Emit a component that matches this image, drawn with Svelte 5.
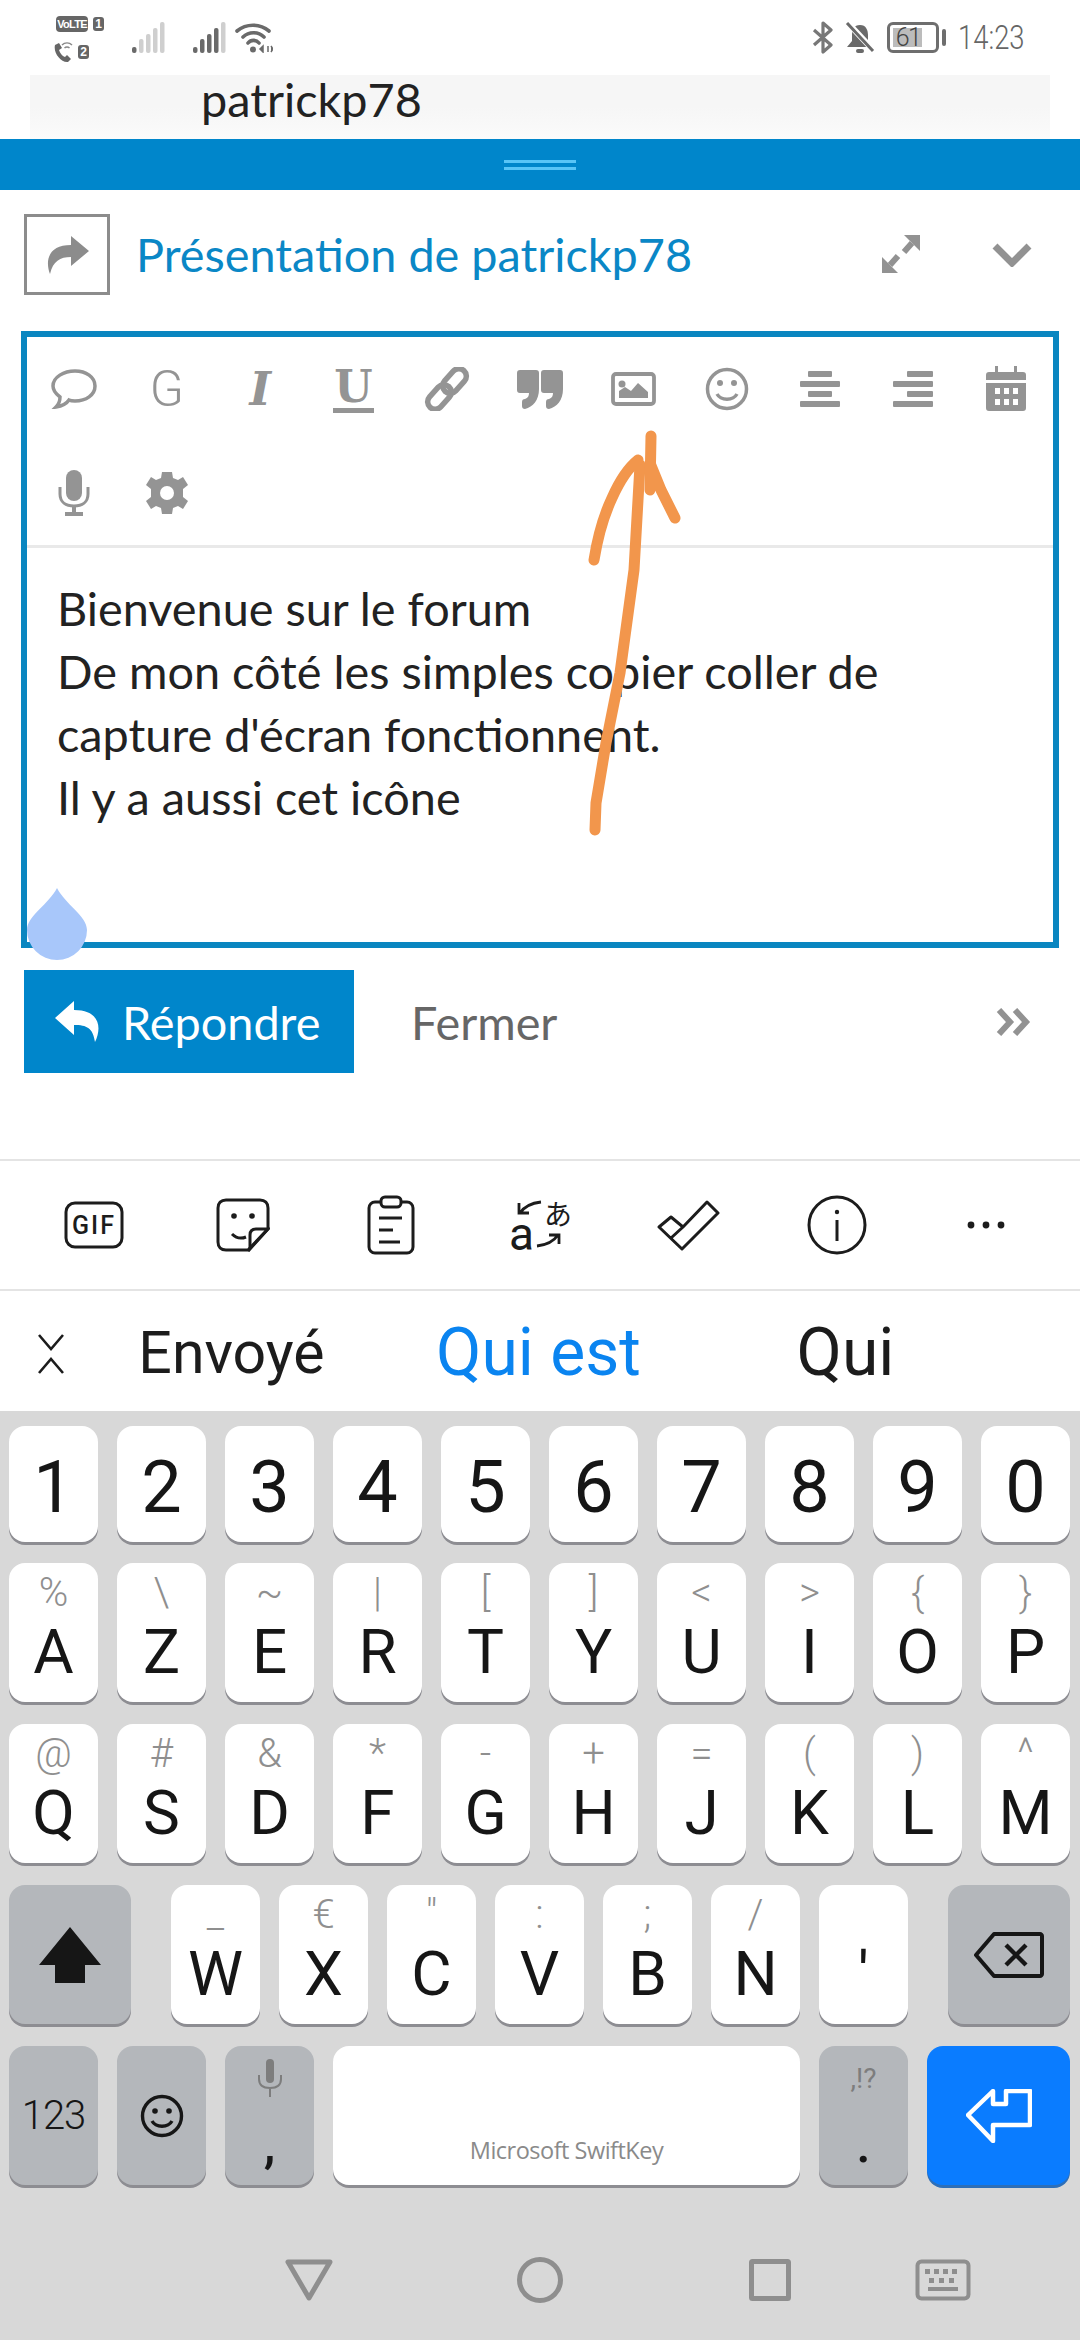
<script>
const row1 = ['1','2','3','4','5','6','7','8','9','0'];
const row2 = [['A','%'],['Z','\\'],['E','~'],['R','|'],['T','['],['Y',']'],['U','<'],['I','>'],['O','{'],['P','}']];
const row3 = [['Q','@'],['S','#'],['D','&'],['F','*'],['G','-'],['H','+'],['J','='],['K','('],['L',')'],['M','^']];
const row4 = [['W','_'],['X','€'],['C','"'],['V',':'],['B',';'],['N','/'],["'",'']];
const lines = ['Bienvenue sur le forum','De mon côté les simples copier coller de',"capture d'écran fonctionnent.",'Il y a aussi cet icône'];
const bars = [6, 14, 19, 25, 31];
</script>

<div class="screen">
  <header class="status">
    <div class="status-left">
      <div class="sims">
        <div class="sim"><span class="volte">VoLTE</span><span class="simno">1</span></div>
        <div class="sim sim2">
          <svg width="20" height="21" viewBox="0 0 20 21"><path d="M1 3l4-2 3 5-3 2c1 3 3 6 6 7l2-2 4 4-3 3C7 21-1 11 1 3z" fill="#666"/><path d="M8 3a7 7 0 0 1 10 0M10.5 6a3.5 3.5 0 0 1 5 0" stroke="#888" stroke-width="1.4" fill="none"/></svg>
          <span class="simno">2</span>
        </div>
      </div>
      <svg class="sig1" width="34" height="31" viewBox="0 0 34 31">
        {#each bars as h, i}
          <rect x={i * 7} y={31 - h} width="4.5" height={h} rx="2" fill={i === 0 ? '#6a6a6a' : '#cfcfcf'}/>
        {/each}
      </svg>
      <svg class="sig2" width="34" height="31" viewBox="0 0 34 31">
        {#each bars as h, i}
          <rect x={i * 7} y={31 - h} width="4.5" height={h} rx="2" fill={i === 4 ? '#cfcfcf' : '#6a6a6a'}/>
        {/each}
      </svg>
      <svg class="wifi" width="38" height="31" viewBox="0 0 38 31" fill="none" stroke="#6a6a6a" stroke-width="3.6" stroke-linecap="round">
        <path d="M2 9a25 25 0 0 1 32 0M8 15a15 15 0 0 1 21 0M13 21a7 7 0 0 1 11 0"/>
        <circle cx="18" cy="27.5" r="3" fill="#6a6a6a" stroke="none"/>
        <path d="M28 24l-3 3 3 3zM33 24v6M36 24l2 3-2 3" stroke-width="1.5" fill="#6a6a6a" stroke-linecap="butt"/>
      </svg>
    </div>
    <div class="status-right">
      <svg width="21" height="33" viewBox="0 0 21 33" fill="none" stroke="#777" stroke-width="3.2" stroke-linejoin="round"><path d="M2 9l17 15-8 7V2l8 7L2 24"/></svg>
      <svg width="30" height="31" viewBox="0 0 30 31"><path d="M15 3c6 0 8 5 8 10v6l5 6H2l5-6v-6c0-5 2-10 8-10z" fill="#6a6a6a"/><rect x="11" y="27" width="8" height="4" rx="2" fill="#6a6a6a"/><path d="M1 -1l29 31" stroke="#fff" stroke-width="6"/><path d="M2 1l26 28" stroke="#6a6a6a" stroke-width="3"/></svg>
      <div class="battery"><div class="batt-body"><span class="batt-fill"></span><span class="batt-no">61</span></div><span class="batt-cap"></span></div>
      <span class="time">14:23</span>
    </div>
  </header>

  <div class="behind"><span>patrickp78</span></div>

  <div class="grip"><span></span><span></span></div>

  <div class="composer-head">
    <div class="action-box">
      <svg width="44" height="38" viewBox="0 0 44 38"><path d="M26 0l18 15-18 15v-9C15 21 8 25 5 38 0 25 3 9 26 9z" fill="#8c8c8c"/></svg>
    </div>
    <div class="title">Présentation de patrickp78</div>
    <svg class="expand" width="38" height="38" viewBox="0 0 38 38" fill="#929292">
      <path d="M22 0h16v16zM0 38V22l16 16z"/>
      <path d="M30 8l-8 9M8 30l8-9" stroke="#929292" stroke-width="6"/>
    </svg>
    <svg class="chev" width="40" height="24" viewBox="0 0 40 24" fill="none" stroke="#929292" stroke-width="7"><path d="M3 3l17 17L37 3"/></svg>
  </div>

  <div class="editor">
    <div class="tools">
      <span class="tool"><svg width="46" height="40" viewBox="0 0 46 40" fill="none" stroke="#949494" stroke-width="3.5"><path d="M24 2c11 0 20 6 20 15s-9 15-20 15c-2 0-4 0-6-1-2 3-7 6-13 7 3-3 4-6 4-10-4-3-7-7-7-11C2 8 13 2 24 2z"/></svg></span>
      <span class="tool letter-g">G</span>
      <span class="tool letter-i">I</span>
      <span class="tool letter-u"><span>U</span></span>
      <span class="tool"><svg width="46" height="44" viewBox="0 0 46 44" fill="none" stroke="#949494" stroke-width="5.5"><rect x="23" y="0" width="15" height="28" rx="7.5" transform="rotate(42 30.5 14)"/><rect x="8" y="16" width="15" height="28" rx="7.5" transform="rotate(42 15.5 30)"/></svg></span>
      <span class="tool"><svg width="46" height="39" viewBox="0 0 46 39" fill="#949494"><path d="M3 0h16c2 0 3 1 3 3v16c0 11-6 18-14 20-2 0-3-1-3-3v-4c0-2 1-3 3-3 3-1 4-3 4-6H3c-2 0-3-1-3-3V3c0-2 1-3 3-3z"/><path d="M27 0h16c2 0 3 1 3 3v16c0 11-6 18-14 20-2 0-3-1-3-3v-4c0-2 1-3 3-3 3-1 4-3 4-6h-9c-2 0-3-1-3-3V3c0-2 1-3 3-3z"/></svg></span>
      <span class="tool"><svg width="45" height="34" viewBox="0 0 45 34"><rect x="2" y="2" width="41" height="30" rx="3" fill="none" stroke="#949494" stroke-width="3.8"/><circle cx="11" cy="12" r="3.5" fill="#949494"/><path d="M8 26v-7l6-4 6 4 7-8 10 9v6z" fill="#949494"/></svg></span>
      <span class="tool"><svg width="44" height="44" viewBox="0 0 44 44" fill="none" stroke="#949494" stroke-width="3.5"><circle cx="22" cy="22" r="19.5"/><circle cx="15" cy="16" r="3" fill="#949494" stroke="none"/><circle cx="29" cy="16" r="3" fill="#949494" stroke="none"/><path d="M12 27c4 7 16 7 20 0"/></svg></span>
      <span class="tool"><svg width="40" height="40" viewBox="0 0 40 40" fill="#949494"><rect x="8" y="2" width="24" height="6" rx="1"/><rect y="12" width="40" height="6" rx="1"/><rect x="8" y="22" width="24" height="6" rx="1"/><rect y="32" width="40" height="6" rx="1"/></svg></span>
      <span class="tool"><svg width="40" height="40" viewBox="0 0 40 40" fill="#949494"><rect x="14" y="2" width="26" height="6" rx="1"/><rect y="12" width="40" height="6" rx="1"/><rect x="14" y="22" width="26" height="6" rx="1"/><rect y="32" width="40" height="6" rx="1"/></svg></span>
      <span class="tool"><svg width="40" height="46" viewBox="0 0 40 46"><path d="M3 6h6V0h3v6h16V0h3v6h6c2 0 3 1 3 3v5H0V9c0-2 1-3 3-3zM0 17h40v25c0 2-1 3-3 3H3c-2 0-3-1-3-3z" fill="#949494"/><g fill="#fff"><rect x="9" y="22" width="5" height="6"/><rect x="18" y="22" width="5" height="6"/><rect x="27" y="22" width="5" height="6"/><rect x="9" y="33" width="5" height="6"/><rect x="18" y="33" width="5" height="6"/><rect x="27" y="33" width="5" height="6"/></g></svg></span>
      <span class="tool"><svg width="34" height="46" viewBox="0 0 34 46"><rect x="9" y="0" width="16" height="31" rx="8" fill="#949494"/><path d="M3 17v7c0 8 6 12 14 12s14-4 14-12v-7" fill="none" stroke="#949494" stroke-width="3"/><path d="M17 36v6M8 44h18" stroke="#949494" stroke-width="4"/></svg></span>
      <span class="tool"><svg width="44" height="44" viewBox="0 0 44 44"><path d="M17 1h10l1 6 5 2 5-3 5 8-5 4v8l5 4-5 8-5-3-5 2-1 6H17l-1-6-5-2-5 3-5-8 5-4v-8L1 14l5-8 5 3 5-2z" fill="#949494"/><circle cx="22" cy="22" r="7" fill="#fff"/></svg></span>
    </div>
    <div class="body-text">
      {#each lines as line}
        <div>{line}</div>
      {/each}
    </div>
    <svg class="drop" width="60" height="72" viewBox="0 0 60 72"><path d="M30 0c8 16 30 28 30 42a30 30 0 0 1-60 0C0 28 22 16 30 0z" fill="#a8c7fa"/></svg>
  </div>

  <div class="actions">
    <button class="reply">
      <svg width="46" height="41" viewBox="0 0 46 41"><path d="M19 0L0 17l19 17V24c13 0 19 3 21 17 7-14 5-32-21-32z" fill="#fff"/></svg>
      Répondre
    </button>
    <span class="close">Fermer</span>
    <svg class="more" width="36" height="28" viewBox="0 0 36 28" fill="none" stroke="#929292" stroke-width="6"><path d="M3 2l11 12L3 26M19 2l11 12-11 12"/></svg>
  </div>

  <div class="kb-tools">
    <span class="kt"><svg width="60" height="48" viewBox="0 0 60 48"><rect x="2" y="2" width="56" height="44" rx="9" fill="none" stroke="#1c1c1c" stroke-width="3"/><text x="30" y="33" text-anchor="middle" class="gif">GIF</text></svg></span>
    <span class="kt"><svg width="54" height="54" viewBox="0 0 54 54" fill="none" stroke="#1c1c1c" stroke-width="3"><path d="M32 52H10c-5 0-8-3-8-8V10c0-5 3-8 8-8h34c5 0 8 3 8 8v21z"/><path d="M52 31H40c-4 0-6 2-6 6v14zM16 36c4 4 9 5 14 3"/><circle cx="18" cy="18" r="2.8" fill="#1c1c1c" stroke="none"/><circle cx="36" cy="18" r="2.8" fill="#1c1c1c" stroke="none"/></svg></span>
    <span class="kt"><svg width="48" height="60" viewBox="0 0 48 60" fill="none" stroke="#1c1c1c" stroke-width="3"><rect x="2" y="7" width="44" height="51" rx="6"/><rect x="14" y="2" width="20" height="10" rx="4" fill="#fff"/><path d="M12 23h23M12 35h14M12 47h21"/></svg></span>
    <span class="kt"><svg width="70" height="76" viewBox="-4 -8 70 76" fill="none" stroke="#1c1c1c" stroke-width="2.8"><text x="0" y="55" class="tr-a">a</text><text x="35" y="30" class="tr-j">あ</text><path d="M32 7c-9 1-17 5-21 11M10 8v10h10M28 51c9-1 17-5 21-11M40 40h10v9"/></svg></span>
    <span class="kt"><svg width="63" height="51" viewBox="0 0 63 51" fill="none" stroke="#1c1c1c" stroke-width="3" stroke-linejoin="round"><path d="M2 27l12-10 12 10L50 2l11 11-36 36zM14 38l12-11"/></svg></span>
    <span class="kt"><svg width="60" height="60" viewBox="0 0 60 60" fill="none" stroke="#1c1c1c" stroke-width="3"><circle cx="30" cy="30" r="28"/><circle cx="30" cy="17" r="2.2" fill="#1c1c1c" stroke="none"/><path d="M30 25v21"/></svg></span>
    <span class="kt"><svg width="38" height="8" viewBox="0 0 38 8" fill="#1c1c1c"><circle cx="4" cy="4" r="3.4"/><circle cx="19" cy="4" r="3.4"/><circle cx="34" cy="4" r="3.4"/></svg></span>
  </div>

  <div class="suggest">
    <svg class="sug-toggle" width="28" height="40" viewBox="0 0 28 40" fill="none" stroke="#1c1c1c" stroke-width="2.6"><path d="M2 1l12 14L26 1M2 39l12-14 12 14"/></svg>
    <span class="sug">Envoyé</span>
    <span class="sug big active">Qui est</span>
    <span class="sug big">Qui</span>
  </div>

  <div class="keyboard">
    <div class="row short">
      {#each row1 as k}
        <div class="key"><span class="digit">{k}</span></div>
      {/each}
    </div>
    <div class="row">
      {#each row2 as [k, s]}
        <div class="key letter"><span class="sec">{s}</span><span class="main">{k}</span></div>
      {/each}
    </div>
    <div class="row">
      {#each row3 as [k, s]}
        <div class="key letter"><span class="sec">{s}</span><span class="main">{k}</span></div>
      {/each}
    </div>
    <div class="row">
      <div class="key fn wide">
        <svg width="62" height="56" viewBox="0 0 62 56"><path d="M31 0l31 38H46v18H16V38H0z" fill="#161616"/></svg>
      </div>
      <div class="letters">
        {#each row4 as [k, s]}
          <div class="key letter"><span class="sec">{s}</span><span class="main">{k}</span></div>
        {/each}
      </div>
      <div class="key fn wide">
        <svg width="70" height="46" viewBox="0 0 70 46" fill="none" stroke="#161616" stroke-width="4"><path d="M20 2h46c1 0 2 1 2 2v38c0 1-1 2-2 2H20L2 23z" stroke-linejoin="round"/><path d="M32 13l20 20M52 13L32 33" stroke-width="4.4"/></svg>
      </div>
    </div>
    <div class="row">
      <div class="key fn"><span class="n123">123</span></div>
      <div class="key fn">
        <svg width="44" height="44" viewBox="0 0 44 44" fill="none" stroke="#161616" stroke-width="3.4"><circle cx="22" cy="22" r="19.5"/><circle cx="15" cy="17" r="2.8" fill="#161616" stroke="none"/><circle cx="29" cy="17" r="2.8" fill="#161616" stroke="none"/><path d="M12 27c4 7 16 7 20 0"/></svg>
      </div>
      <div class="key fn stack">
        <svg width="26" height="38" viewBox="0 0 26 38"><rect x="9" y="0" width="8" height="24" rx="4" fill="#7d7d7d"/><path d="M2 16v4c0 6 4 9 11 9s11-3 11-9v-4M13 29v9" fill="none" stroke="#7d7d7d" stroke-width="2"/></svg>
        <span class="punct">,</span>
      </div>
      <div class="key space"><span class="brand">Microsoft SwiftKey</span></div>
      <div class="key fn stack">
        <span class="sec-small">,!?</span>
        <span class="punct">.</span>
      </div>
      <div class="key enter">
        <svg width="66" height="54" viewBox="0 0 66 54" fill="none" stroke="#fff" stroke-width="4.5" stroke-linejoin="round"><path d="M2 26L27 2v13h13V2h24v34H27v16z"/></svg>
      </div>
    </div>
    <nav class="nav">
      <svg width="48" height="42" viewBox="0 0 48 42" fill="none" stroke="#8e8e8e" stroke-width="5" stroke-linejoin="round"><path d="M3 3h42L24 39z"/></svg>
      <svg width="46" height="46" viewBox="0 0 46 46" fill="none" stroke="#8e8e8e" stroke-width="5"><circle cx="23" cy="23" r="20.5"/></svg>
      <svg width="42" height="42" viewBox="0 0 42 42" fill="none" stroke="#8e8e8e" stroke-width="5"><rect x="2.5" y="2.5" width="37" height="37" rx="1"/></svg>
      <svg width="56" height="42" viewBox="0 0 56 42"><rect x="2.5" y="2.5" width="51" height="37" rx="4" fill="none" stroke="#8e8e8e" stroke-width="4"/><g fill="#8e8e8e"><rect x="10" y="10" width="5" height="5"/><rect x="19" y="10" width="5" height="5"/><rect x="28" y="10" width="5" height="5"/><rect x="37" y="10" width="5" height="5"/><rect x="14" y="19" width="5" height="5"/><rect x="24" y="19" width="5" height="5"/><rect x="34" y="19" width="5" height="5"/><rect x="13" y="28" width="30" height="4"/></g></svg>
    </nav>
  </div>

  <!-- hand-drawn arrow over the screenshot -->
  <svg class="arrow" width="1080" height="900" viewBox="0 0 1080 900" fill="none" stroke="#f2964c" stroke-width="11" stroke-linecap="round" stroke-linejoin="round">
    <path d="M595 830L596 803 606 743 620 673 634 570 638 500 640 465"/>
    <path d="M594 560C598 535 604 515 612 498 620 480 628 468 638 460"/>
    <path d="M651 436L650 490M650 463L661 490 675 518"/>
  </svg>
</div>

<style>
:global(body) {
  margin: 0;
  background: #fff;
}

.screen {
  position: relative;
  width: 1080px;
  height: 2340px;
  overflow: hidden;
  display: flex;
  flex-direction: column;
  font-family: Lato, "Liberation Sans", sans-serif;
  background: #fff;
}

/* status bar */
.status {
  height: 75px;
  display: flex;
  justify-content: space-between;
  padding: 0 56px 0 54px;
  box-sizing: border-box;
}
.status-left, .status-right {
  display: flex;
  align-items: center;
}
.sims { display: flex; flex-direction: column; gap: 10px; width: 78px; padding: 3px 0 0 2px; box-sizing: border-box; }
.sim { display: flex; gap: 5px; align-items: center; }
.sim2 { gap: 4px; margin-left: -2px; }
.volte {
  width: 32px;
  height: 16px;
  border-radius: 4px;
  background: #666;
  color: #fff;
  font: 700 11px/16px "Liberation Sans", sans-serif;
  letter-spacing: -0.7px;
  text-align: center;
}
.simno {
  width: 11px;
  height: 14px;
  border-radius: 3px;
  background: #666;
  color: #fff;
  font: 700 12px/14px "Liberation Sans", sans-serif;
  text-align: center;
}
.sig1 { margin-right: 27px; }
.sig2 { margin-right: 8px; }
.status-right { gap: 12px; }
.battery { display: flex; align-items: center; gap: 3px; }
.batt-body {
  position: relative;
  width: 52px;
  height: 31px;
  box-sizing: border-box;
  border: 3px solid #6e6e6e;
  border-radius: 6px;
  display: flex;
  padding: 3px;
}
.batt-fill { width: 29px; background: #bcbcbc; }
.batt-no {
  position: absolute;
  left: 0;
  right: 10px;
  top: -1px;
  text-align: center;
  font: 300 25px/27px Roboto, sans-serif;
  letter-spacing: -1.5px;
  color: #444;
}
.batt-cap { width: 4px; height: 17px; background: #6e6e6e; border-radius: 2px; }
.time {
  width: 66px;
  white-space: nowrap;
  font: 300 33px/1 Roboto, sans-serif;
  color: #666;
  transform: scaleX(0.83);
  transform-origin: left;
}

/* page behind the composer */
.behind {
  height: 64px;
  margin: 0 30px;
  background: linear-gradient(#f6f6f6 50%, #fbfbfb);
  padding-left: 171px;
  font-size: 46.8px;
  line-height: 48px;
  color: #222;
}

.grip {
  height: 51px;
  background: #0086cb;
  display: flex;
  flex-direction: column;
  align-items: center;
  justify-content: center;
  gap: 4px;
}
.grip span { width: 72px; height: 3px; background: #59c5f7; }

.composer-head {
  height: 141px;
  box-sizing: border-box;
  padding: 24px 48px 0 24px;
  display: flex;
  align-items: flex-start;
}
.action-box {
  width: 86px;
  height: 81px;
  box-sizing: border-box;
  border: 3px solid #8c8c8c;
  display: flex;
  align-items: center;
  justify-content: center;
}
.title {
  margin-left: 26px;
  flex: 1;
  font-size: 46.8px;
  line-height: 81px;
  color: #0a87c6;
}
.expand { margin: 21px 72px 0 0; }
.chev { margin-top: 29px; }

/* editor */
.editor {
  position: relative;
  height: 617px;
  margin: 0 21px;
  box-sizing: border-box;
  border: 6px solid #0a86c0;
  display: flex;
  flex-direction: column;
}
.tools {
  display: grid;
  grid-template-columns: repeat(11, 1fr);
  grid-auto-rows: 104px;
  border-bottom: 3px solid #e9e9e9;
}
.tool {
  display: flex;
  align-items: center;
  justify-content: center;
  color: #949494;
}
.letter-g { font: 300 50px/1 Roboto, sans-serif; }
.letter-i { font: italic 700 46px/1 "DejaVu Serif", serif; }
.letter-u span {
  font: 700 44px/42px "DejaVu Serif", serif;
  border-bottom: 5px solid #949494;
  padding: 0 1px;
}
.body-text {
  padding: 29px 0 0 30px;
  font-size: 46.8px;
  line-height: 63px;
  color: #222;
}
.drop { position: absolute; left: 0; top: 551px; }

.actions {
  margin-top: 22px;
  height: 103px;
  padding: 0 48px 0 24px;
  display: flex;
  align-items: center;
}
.reply {
  width: 330px;
  height: 103px;
  border: 0;
  background: #0086cb;
  color: #fff;
  font: 400 46.8px Lato, sans-serif;
  display: flex;
  align-items: center;
  gap: 21px;
  padding: 0 0 0 31px;
}
.close { margin-left: 57px; flex: 1; font-size: 46.8px; color: #666; }

/* keyboard top strip */
.kb-tools {
  margin-top: 86px;
  height: 128px;
  padding: 0 20px;
  border-top: 2px solid #e4e4e4;
  border-bottom: 2px solid #e4e4e4;
  display: grid;
  grid-template-columns: repeat(7, 1fr);
}
.kt { display: flex; align-items: center; justify-content: center; }
.gif { font: 500 25px Roboto, sans-serif; fill: #1c1c1c; stroke: none; letter-spacing: 2px; }
.tr-a { font: 400 46px Roboto, sans-serif; fill: #1c1c1c; stroke: none; }
.tr-j { font: 400 28px "Noto Sans CJK JP", sans-serif; fill: #1c1c1c; stroke: none; }

.suggest {
  height: 120px;
  padding: 3px 81px 0 78px;
  box-sizing: border-box;
  position: relative;
  display: grid;
  grid-template-columns: repeat(3, 1fr);
  align-items: center;
  justify-items: center;
  font: 400 59px Roboto, sans-serif;
  color: #1c1c1c;
}
.big { font-size: 66px; }
.sug-toggle { position: absolute; left: 37px; top: 43px; }
.active { color: #0a84f0; }

/* keyboard */
.keyboard {
  flex: 1;
  background: #d8d8d8;
  padding: 15px 10px 0 9px;
  display: flex;
  flex-direction: column;
  gap: 22px;
}
.row {
  display: flex;
  gap: 19px;
  height: 139px;
}
.row.short { height: 116px; margin-bottom: -1px; }
.key {
  width: 89px;
  flex: none;
  background: #fff;
  border-radius: 16px;
  box-shadow: 0 3px 0 #8d8d92;
  display: flex;
  flex-direction: column;
  align-items: center;
  justify-content: center;
  color: #161616;
  font-family: Roboto, sans-serif;
}
.digit { font-size: 72px; line-height: 1; margin-top: 8px; }
.letter { justify-content: flex-end; padding-bottom: 19px; box-sizing: border-box; }
.main { font-size: 62px; line-height: 62px; }
.sec { font-size: 40px; font-weight: 300; line-height: 44px; margin-bottom: 6px; color: #8f8f8f; height: 44px; }
.fn { background: #b4b7bb; }
.wide { width: 122px; }
.letters {
  flex: 1;
  display: flex;
  gap: 19px;
  justify-content: center;
}
.space { width: 467px; justify-content: flex-end; padding-bottom: 19px; box-sizing: border-box; background: #fff; }
.brand { font: 400 23.5px "Open Sans", sans-serif; color: #8a8a8a; letter-spacing: -0.5px; }
.n123 { font-size: 40px; font-weight: 300; letter-spacing: -1px; }
.stack { justify-content: space-between; padding: 13px 0 20px; box-sizing: border-box; }
.punct { font-size: 52px; line-height: 40px; font-weight: 500; }
.sec-small { font-size: 28px; line-height: 32px; color: #7d7d7d; margin-top: 4px; }
.enter { width: 143px; background: #0a7cff; box-shadow: 0 3px 0 #2e6fb8; }

.nav {
  display: grid;
  grid-template-columns: 425px 230px 230px 116px;
  justify-items: center;
  align-items: center;
  margin: 50px 0 0 -9px;
  height: 46px;
}
.nav svg:first-child { justify-self: end; margin-right: 92px; }

.arrow { position: absolute; left: 0; top: 0; pointer-events: none; }
</style>
